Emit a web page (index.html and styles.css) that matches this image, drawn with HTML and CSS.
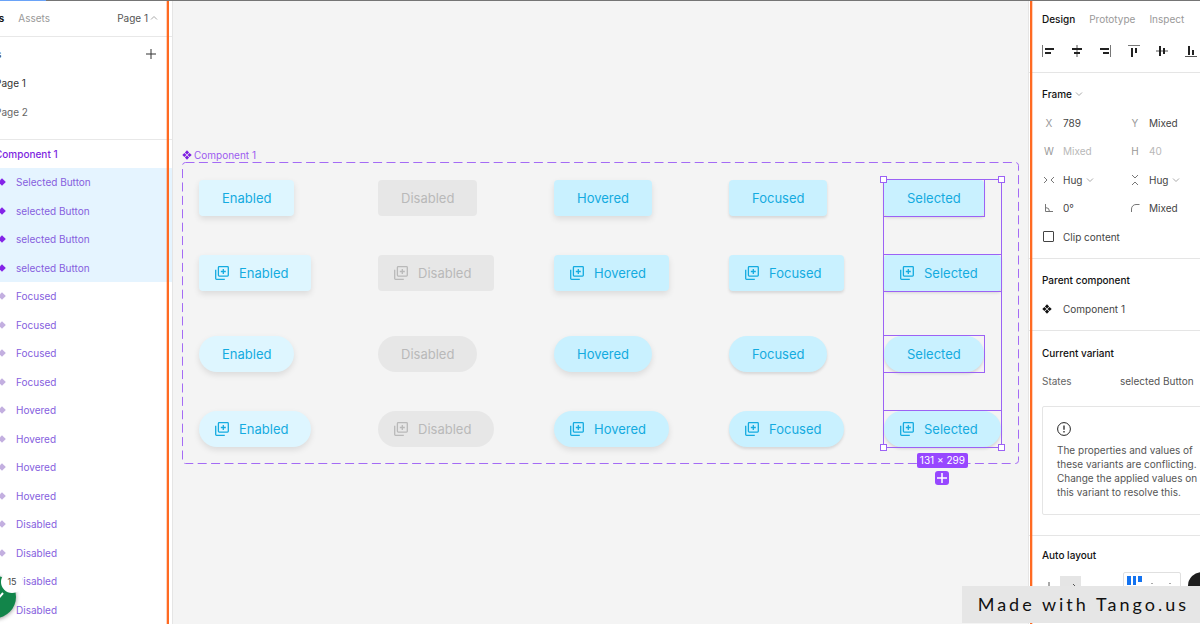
FILE: index.html
```html
<!DOCTYPE html>
<html lang="en">
<head>
    <meta charset="UTF-8">
    <title>Component 1</title>
    <link rel="stylesheet" href="styles.css">
</head>
<body>
    <!--shared icons-->
    <svg class="defs" aria-hidden="true">
        <symbol id="copy" viewBox="0 0 14 14">
            <path d="M4.2.7h8.3a.8.8 0 0 1 .8.8v7.8a.8.8 0 0 1-.8.8H4.2a.8.8 0 0 1-.8-.8V1.500a.8.8 0 0 1 .8-.8zM.7 3.800v8.700a.8.8 0 0 0 .8.8h8.300M8.300 3v5M5.800 5.500h5" fill="none" stroke="currentColor" stroke-width="1.300"/>
        </symbol>
        <symbol id="diamond" viewBox="0 0 8 8">
            <path d="M4 .2 7.800 4 4 7.800.2 4z" fill="currentColor"/>
        </symbol>
        <symbol id="component" viewBox="0 0 10 10">
            <path d="M5 .3 7.100 2.400 5 4.500 2.900 2.400zM5 5.500l2.100 2.100L5 9.700 2.900 7.600zM2.400 2.900 4.500 5 2.400 7.100.3 5zM7.600 2.900 9.700 5 7.600 7.100 5.500 5z" fill="currentColor"/>
        </symbol>
        <symbol id="caret" viewBox="0 0 8 8">
            <path d="M1 2.500 4 5.500 7 2.500" fill="none" stroke="currentColor"/>
        </symbol>
    </svg>
    <div class="topBar"></div>
    <div class="app">
        <!--layers-->
        <aside class="layers">
            <header class="tabs">
                <button class="active">Layers</button>
                <button>Assets</button>
                <button class="pageBtn">Page 1 <svg class="caret up"><use href="#caret"/></svg></button>
            </header>
            <div class="pages">
                <div class="pagesTitle">
                    <span>Pages</span>
                    <button class="addPage" aria-label="Add page"><svg viewBox="0 0 10 10"><path d="M5 0v10M0 5h10" stroke="#333" fill="none"/></svg></button>
                </div>
                <a class="current" href="#page1">Page 1</a>
                <a href="#page2">Page 2</a>
            </div>
            <div class="rootLayer">Component 1</div>
            <ul class="layerList">
                <li class="on"><svg><use href="#diamond"/></svg>Selected Button</li>
                <li class="on"><svg><use href="#diamond"/></svg>selected Button</li>
                <li class="on"><svg><use href="#diamond"/></svg>selected Button</li>
                <li class="on"><svg><use href="#diamond"/></svg>selected Button</li>
                <li><svg><use href="#diamond"/></svg>Focused</li>
                <li><svg><use href="#diamond"/></svg>Focused</li>
                <li><svg><use href="#diamond"/></svg>Focused</li>
                <li><svg><use href="#diamond"/></svg>Focused</li>
                <li><svg><use href="#diamond"/></svg>Hovered</li>
                <li><svg><use href="#diamond"/></svg>Hovered</li>
                <li><svg><use href="#diamond"/></svg>Hovered</li>
                <li><svg><use href="#diamond"/></svg>Hovered</li>
                <li><svg><use href="#diamond"/></svg>Disabled</li>
                <li><svg><use href="#diamond"/></svg>Disabled</li>
                <li><svg><use href="#diamond"/></svg>Disabled</li>
                <li><svg><use href="#diamond"/></svg>Disabled</li>
            </ul>
        </aside>

        <!--canvas-->
        <main class="canvas">
            <div class="frameName"><svg><use href="#component"/></svg>Component 1</div>
            <div class="frame">
                <svg class="dashes"><rect x="0.5" y="0.5" rx="3" fill="none" stroke="#a46bf5" stroke-dasharray="9 4.400"/></svg>
                <div class="column enabled">
                    <button class="btn">Enabled</button>
                    <button class="btn icon"><svg><use href="#copy"/></svg>Enabled</button>
                    <button class="btn pill">Enabled</button>
                    <button class="btn icon pill"><svg><use href="#copy"/></svg>Enabled</button>
                </div>
                <div class="column disabled">
                    <button class="btn" disabled>Disabled</button>
                    <button class="btn icon" disabled><svg><use href="#copy"/></svg>Disabled</button>
                    <button class="btn pill" disabled>Disabled</button>
                    <button class="btn icon pill" disabled><svg><use href="#copy"/></svg>Disabled</button>
                </div>
                <div class="column hovered">
                    <button class="btn">Hovered</button>
                    <button class="btn icon"><svg><use href="#copy"/></svg>Hovered</button>
                    <button class="btn pill">Hovered</button>
                    <button class="btn icon pill"><svg><use href="#copy"/></svg>Hovered</button>
                </div>
                <div class="column focused">
                    <button class="btn">Focused</button>
                    <button class="btn icon"><svg><use href="#copy"/></svg>Focused</button>
                    <button class="btn pill">Focused</button>
                    <button class="btn icon pill"><svg><use href="#copy"/></svg>Focused</button>
                </div>
                <div class="column selected">
                    <div class="pick"><button class="btn">Selected</button></div>
                    <div class="pick"><button class="btn icon"><svg><use href="#copy"/></svg>Selected</button></div>
                    <div class="pick"><button class="btn pill">Selected</button></div>
                    <div class="pick"><button class="btn icon pill"><svg><use href="#copy"/></svg>Selected</button></div>
                    <div class="bounds">
                        <i class="handle tl"></i>
                        <i class="handle tr"></i>
                        <i class="handle bl"></i>
                        <i class="handle br"></i>
                    </div>
                    <div class="selInfo">
                        <span class="size">131 × 299</span>
                        <button class="addVariant" aria-label="Add variant"><svg viewBox="0 0 14 14"><path d="M7 2v10M2 7h10" stroke="#fff" stroke-width="1.500"/></svg></button>
                    </div>
                </div>
            </div>
        </main>

        <!--properties-->
        <aside class="props">
            <div class="propsInner">
                <header class="tabs">
                    <button class="active">Design</button>
                    <button>Prototype</button>
                    <button>Inspect</button>
                </header>
                <div class="align">
                    <button aria-label="Align left"><svg viewBox="0 0 14 14"><path d="M1.500 1v12" stroke="#777"/><path d="M4 5h9M4 9h6" stroke="#222" stroke-width="2"/></svg></button>
                    <button aria-label="Align horizontal centers"><svg viewBox="0 0 14 14"><path d="M7 1v12" stroke="#555"/><path d="M2 5h10M4 9h6" stroke="#222" stroke-width="2"/></svg></button>
                    <button aria-label="Align right"><svg viewBox="0 0 14 14"><path d="M12.500 1v12" stroke="#777"/><path d="M2 5h9M5 9h6" stroke="#222" stroke-width="2"/></svg></button>
                    <button aria-label="Align top"><svg viewBox="0 0 14 14"><path d="M1 1.500h12" stroke="#777"/><path d="M5 4v9M9 4v5" stroke="#222" stroke-width="2"/></svg></button>
                    <button aria-label="Align vertical centers"><svg viewBox="0 0 14 14"><path d="M1 7h12" stroke="#555"/><path d="M5 2v10M9 4v6" stroke="#222" stroke-width="2"/></svg></button>
                    <button aria-label="Align bottom"><svg viewBox="0 0 14 14"><path d="M1 12.500h12" stroke="#555"/><path d="M5 2v9M9 6v5" stroke="#222" stroke-width="2"/></svg></button>
                </div>

                <section class="box rows6">
                    <h2>Frame <svg class="caret"><use href="#caret"/></svg></h2>
                    <div class="pair">
                        <label for="x">X</label><input id="x" value="789">
                        <label for="y">Y</label><input id="y" value="Mixed">
                    </div>
                    <div class="pair dim">
                        <label for="w">W</label><input id="w" value="Mixed">
                        <label for="h">H</label><input id="h" value="40">
                    </div>
                    <div class="pair">
                        <label for="hugX" aria-label="Horizontal resizing"><svg viewBox="0 0 12 12"><path d="M1 3l3 3-3 3M11 3 8 6l3 3" fill="none" stroke="#777"/></svg></label>
                        <span class="pick2"><select id="hugX"><option>Hug</option></select><svg class="caret"><use href="#caret"/></svg></span>
                        <label for="hugY" aria-label="Vertical resizing"><svg viewBox="0 0 12 12"><path d="M3 1l3 3 3-3M3 11l3-3 3 3" fill="none" stroke="#777"/></svg></label>
                        <span class="pick2"><select id="hugY"><option>Hug</option></select><svg class="caret"><use href="#caret"/></svg></span>
                    </div>
                    <div class="pair">
                        <label for="rot" aria-label="Rotation"><svg viewBox="0 0 12 12"><path d="M2.500 2v7.500H10M2.500 5.500a4 4 0 0 1 4 4" fill="none" stroke="#777"/></svg></label><input id="rot" value="0°">
                        <label for="radius" aria-label="Corner radius"><svg viewBox="0 0 12 12"><path d="M2.500 10V7a4.500 4.500 0 0 1 4.500-4.500h3.500" fill="none" stroke="#777"/></svg></label><input id="radius" value="Mixed">
                    </div>
                    <div class="check">
                        <input type="checkbox" id="clip"><label for="clip">Clip content</label>
                    </div>
                </section>

                <section class="box rows2">
                    <h2>Parent component</h2>
                    <div class="parent"><svg><use href="#component"/></svg>Component 1</div>
                </section>

                <section class="box rows2 variant">
                    <h2>Current variant</h2>
                    <div class="state">
                        <label for="states">States</label>
                        <select id="states"><option>selected Button</option></select>
                    </div>
                    <div class="notice">
                        <svg viewBox="0 0 14 14"><circle cx="7" cy="7" r="6.400" fill="none" stroke="#222"/><path d="M7 3.500v4.200M7 9v1.500" stroke="#222" stroke-width="1.300"/></svg>
                        <p>The properties and values of these variants are conflicting. Change the applied values on this variant to resolve this.</p>
                    </div>
                </section>

                <section class="auto">
                    <h2>Auto layout</h2>
                    <div class="autoRow">
                        <button aria-label="Vertical"><svg viewBox="0 0 12 12"><path d="M6 1v10M3 8l3 3 3-3" fill="none" stroke="#555"/></svg></button>
                        <button class="on" aria-label="Horizontal"><svg viewBox="0 0 12 12"><path d="M1 6h10M8 3l3 3-3 3" fill="none" stroke="#555"/></svg></button>
                        <div class="alignBox"><svg viewBox="0 0 56 40"><path d="M3 3h4v9H3zM9 3h3v9H9zM14 3h4v6h-4z" fill="#1473f0"/><path d="M27 10h2v1h-2zM45 10h2v1h-2z" fill="#aaa"/></svg></div>
                    </div>
                </section>
            </div>
        </aside>
    </div>

    <!--overlays-->
    <div class="highlight"></div>
    <div class="progress"><svg viewBox="0 0 42 42"><path d="M16 19l6 6 7-8" fill="none" stroke="#fff" stroke-width="2"/></svg></div>
    <span class="count">15</span>
    <div class="help"></div>
    <div class="tango">Made with Tango.us</div>
</body>
</html>
```
FILE: styles.css
```css
*{
    padding: 0;
    margin: 0;
    box-sizing: border-box;
    list-style: none;
}
body{
    position: relative;
    height: 100vh;
    overflow: hidden;
    background-color: #f4f4f4;
    font-family: Inter, "Liberation Sans", sans-serif;
    font-size: 10px;
    color: #444;
}
button,input,select{
    font: inherit;
    color: inherit;
    border: none;
    background: none;
    appearance: none;
}
svg{
    display: block;
    flex: none;
}
.defs{
    position: absolute;
    width: 0;
    height: 0;
}
.topBar{
    position: absolute;
    z-index: 2;
    top: 0;
    left: 0;
    right: 0;
    height: 1px;
    background: linear-gradient(to right, #6aa3f8 46px, #757575 46px);
}
.app{
    display: flex;
    height: 100%;
}
.caret{
    width: 8px;
    height: 8px;
    color: #aaa;
}
.caret.up{
    transform: rotate(180deg);
}
.tabs{
    display: flex;
    align-items: center;
    height: 37px;
    color: #999;
}
.tabs .active{
    color: #111;
    font-weight: 600;
}

/* layers */
.layers{
    display: flex;
    flex-direction: column;
    flex: none;
    width: 205px;
    margin-left: -32px;
    background-color: #fff;
    border-right: 1px solid #e5e5e5;
}
.layers .tabs{
    gap: 14px;
    padding: 0 14px 0 4px;
    border-bottom: 1px solid #e8e8e8;
}
.layers .pageBtn{
    display: flex;
    align-items: center;
    gap: 2px;
    margin-left: auto;
    color: #555;
}
.pages{
    display: grid;
    grid-template-rows: repeat(3, 1fr);
    height: 103px;
    padding: 3px 0 13px;
    border-bottom: 1px solid #e8e8e8;
    align-items: center;
}
.pagesTitle{
    display: flex;
    justify-content: space-between;
    padding: 0 16px 0 4px;
    align-items: center;
    font-weight: 500;
}
.addPage svg{
    width: 10px;
    height: 10px;
}
.pages a{
    padding-left: 27px;
    color: #666;
    text-decoration: none;
}
.pages .current{
    color: #333;
}
.rootLayer{
    height: 28px;
    padding-left: 27px;
    line-height: 28px;
    font-weight: 500;
    color: #7d1fe0;
}
.layerList{
    display: grid;
    grid-auto-rows: 1fr;
    flex: 1;
}
.layerList li{
    display: flex;
    align-items: center;
    gap: 10px;
    padding-left: 30px;
    color: #8560de;
}
.layerList li svg{
    width: 8px;
    height: 8px;
    color: #c3afe0;
}
.layerList .on{
    background-color: #e5f4ff;
}
.layerList .on svg{
    color: #8424e8;
}

/* canvas */
.canvas{
    flex: 1;
    min-width: 0;
    padding: 148px 9px 0 9px;
}
.frameName{
    display: flex;
    align-items: center;
    gap: 2px;
    height: 14px;
    color: #9c5cf0;
}
.frameName svg{
    width: 10px;
    height: 10px;
    color: #7d1fe0;
}
.frame{
    position: relative;
    display: grid;
    grid-template-columns: 179fr 176fr 175fr 155fr 135fr;
    padding: 18px 0 17px 17px;
}
.dashes{
    position: absolute;
    width: 100%;
    height: 100%;
}
.dashes rect{
    width: calc(100% - 1px);
    height: calc(100% - 1px);
}
.column{
    position: relative;
    display: flex;
    flex-direction: column;
    align-items: flex-start;
    gap: 39px;
    width: fit-content;
}
.column > :nth-child(3){
    margin-top: 6px;
}
.btn{
    display: flex;
    align-items: center;
    gap: 10px;
    height: 36px;
    padding: 0 23px 1px;
    border-radius: 4px;
    font-size: 13px;
    color: #14abe0;
    background-color: #c9f1ff;
    box-shadow: 0 3px 6px rgba(0,0,0,0.1);
}
.btn.icon{
    padding-left: 16px;
}
.btn.pill{
    border-radius: 18px;
}
.btn svg{
    width: 14px;
    height: 14px;
}
.enabled .btn{
    background-color: #def6ff;
}
.disabled .btn{
    color: #b9b9b9;
    background-color: #e7e7e7;
    box-shadow: none;
}
.focused .btn,
.selected .btn{
    box-shadow: 0 2px 3px rgba(0,0,0,0.12);
}
.pick{
    outline: 1px solid #9c62f5;
}
.bounds{
    position: absolute;
    top: -1px;
    right: -1px;
    bottom: -1px;
    left: -1px;
    border: 1px solid #9c62f5;
}
.handle{
    position: absolute;
    width: 7px;
    height: 7px;
    border: 1px solid #9c62f5;
    background-color: #fff;
}
.tl,.tr{
    top: -4px;
}
.bl,.br{
    bottom: -4px;
}
.tl,.bl{
    left: -4px;
}
.tr,.br{
    right: -4px;
}
.selInfo{
    position: absolute;
    top: 100%;
    left: 0;
    right: 0;
    display: flex;
    flex-direction: column;
    align-items: center;
    gap: 3px;
    padding-top: 6px;
}
.size{
    padding: 0 3px;
    border-radius: 2px;
    line-height: 15px;
    white-space: nowrap;
    color: #fff;
    background-color: #9747ff;
}
.addVariant{
    border-radius: 3px;
    background-color: #9747ff;
}
.addVariant svg{
    width: 14px;
    height: 14px;
}

/* properties */
.props{
    flex: none;
    width: 172px;
    overflow: hidden;
    background-color: #fff;
    border-left: 1px solid #e5e5e5;
}
.propsInner{
    width: 190px;
}
.props .tabs{
    gap: 14px;
    padding-left: 13px;
}
.align{
    display: grid;
    grid-template-columns: repeat(6, 1fr);
    width: 171px;
    height: 27px;
    margin-left: 5px;
}
.align button{
    display: flex;
    align-items: center;
    justify-content: center;
}
.align svg{
    width: 14px;
    height: 14px;
}
.box{
    display: grid;
    align-items: center;
    padding: 7px 0 7px 13px;
    border-top: 1px solid #e5e5e5;
}
.align + .box{
    margin-top: 8px;
}
.rows6{
    grid-template-rows: repeat(6, 1fr);
    height: 186px;
}
.rows2{
    grid-template-rows: repeat(2, 1fr);
    height: 72px;
}
h2,
.props .tabs .active{
    font-weight: 500;
}
h2{
    display: flex;
    align-items: center;
    gap: 3px;
    font-size: 10px;
    color: #111;
}
.pair{
    display: grid;
    grid-template-columns: 21px 65px 21px 60px;
    align-items: center;
}
.pair label{
    width: 14px;
    text-align: center;
    color: #999;
}
.pair label svg{
    width: 12px;
    height: 12px;
    margin: 0 auto;
}
.pair input{
    width: 100%;
}
.pair.dim input{
    color: #b8b8b8;
}
.pick2{
    display: flex;
    align-items: center;
    gap: 3px;
}
.check{
    display: flex;
    align-items: center;
    gap: 9px;
    padding-left: 1px;
}
.check input{
    width: 11px;
    height: 11px;
    border: 1px solid #444;
    border-radius: 1px;
}
.parent{
    display: flex;
    align-items: center;
    gap: 11px;
}
.parent svg{
    width: 10px;
    height: 10px;
    color: #111;
}
.variant{
    grid-template-rows: 29px 28px auto;
    height: auto;
    padding-bottom: 20px;
}
.state{
    display: grid;
    grid-template-columns: 78px 1fr;
    align-items: center;
    color: #666;
}
.state select{
    color: #555;
}
.notice{
    margin-top: 11px;
    padding: 15px 14px;
    border: 1px solid #e5e5e5;
    border-radius: 2px;
}
.notice svg{
    width: 14px;
    height: 14px;
}
.notice p{
    margin-top: 7px;
    line-height: 14px;
    color: #555;
}
.auto{
    border-top: 1px solid #e5e5e5;
    padding: 5px 0 0 13px;
}
.auto h2{
    height: 28px;
}
.autoRow{
    display: flex;
    align-items: flex-start;
    padding-top: 3px;
}
.autoRow button{
    display: flex;
    align-items: center;
    justify-content: center;
    width: 21px;
    height: 21px;
    margin-top: 4px;
}
.autoRow button:first-child{
    width: 14px;
    margin-right: 4px;
}
.autoRow .on{
    background-color: #e5e5e5;
}
.autoRow svg{
    width: 12px;
    height: 12px;
}
.alignBox{
    width: 58px;
    height: 42px;
    margin-left: 42px;
    border: 1px solid #e0e0e0;
    border-radius: 2px;
}
.alignBox svg{
    width: 56px;
    height: 40px;
}

/* overlays */
.highlight{
    position: absolute;
    top: 0;
    bottom: 0;
    left: 167px;
    right: 168px;
    border: solid #ff6a22;
    border-width: 0 2px;
    box-shadow: 0 0 0 1px rgba(255,106,34,0.3);
    pointer-events: none;
}
.progress{
    position: absolute;
    left: -26px;
    bottom: 6px;
    width: 42px;
    height: 42px;
    border-radius: 50%;
    background-color: #12854a;
    box-shadow: 0 1px 4px rgba(0,0,0,0.4);
}
.count{
    position: absolute;
    left: 1px;
    bottom: 31px;
    width: 22px;
    height: 22px;
    border-radius: 50%;
    line-height: 22px;
    text-align: center;
    font-size: 9px;
    background-color: #fff;
}
.help{
    position: absolute;
    right: -16px;
    bottom: 24px;
    width: 28px;
    height: 28px;
    border-radius: 50%;
    background-color: #1e1e1e;
}
.tango{
    position: absolute;
    right: 0;
    bottom: 1px;
    padding: 0 11px 0 16px;
    line-height: 37px;
    font-family: Lato, sans-serif;
    font-size: 18px;
    letter-spacing: 3px;
    color: #111;
    background-color: #e6e6e6;
}
```
